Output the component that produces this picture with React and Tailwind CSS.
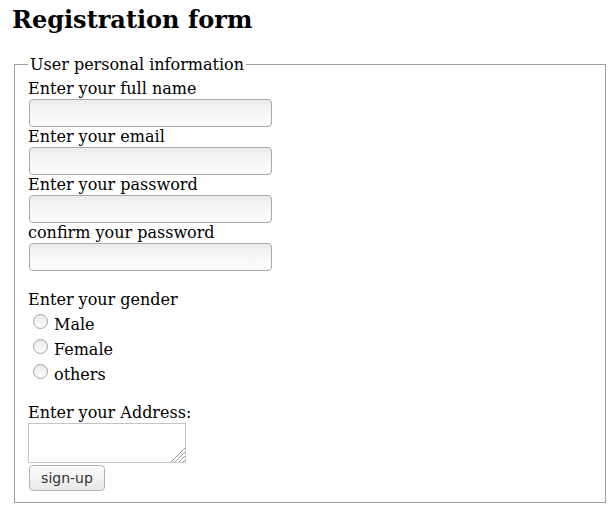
import React from "react";

const fields = [
  { label: "Enter your full name", type: "text" },
  { label: "Enter your email", type: "email" },
  { label: "Enter your password", type: "password" },
  { label: "confirm your password", type: "password" },
];

const genders = ["Male", "Female", "others"];

const Radio = ({ label }) => (
  <label className="flex items-start h-[19px] leading-[19px]">
    <span className="ml-[6px] mt-[-1px] w-[15px] h-[15px] rounded-full border border-[#a3a3a3] bg-linear-to-b from-[#e9e9e9] to-[#fdfdfd] shrink-0" />
    <span className="ml-[6px]">{label}</span>
  </label>
);

const App = () => {
  return (
    <div className="w-[608px] h-[507px] bg-white text-black font-['DejaVu_Serif',serif] text-[16px]">
      <h1 className="pt-[6px] ml-[12px] text-[24px] font-bold leading-[28px]">
        Registration form
      </h1>
      <form onSubmit={(e) => e.preventDefault()}>
        <fieldset className="mt-[21px] ml-[14px] mr-[2px] border border-[#a0a0a0] px-[12px] pb-[11px] pt-[5px]">
          <legend className="px-[2px] leading-[19px] ml-[1px]">
            User personal information
          </legend>
          <div className="flex flex-col">
            {fields.map((f) => (
              <div key={f.label} className="flex flex-col">
                <label className="h-[19px] leading-[19px] ml-[1px]">{f.label}</label>
                <input
                  type={f.type}
                  className="mt-[1px] ml-[2px] w-[243px] h-[28px] rounded-[4px] border border-[#a8a8a8] bg-linear-to-b from-[#ebebeb] via-[#f7f7f7] to-[#fcfcfc] px-[4px] outline-none"
                />
              </div>
            ))}

            <div className="mt-[19px] h-[19px] leading-[19px] ml-[1px]">Enter your gender</div>
            <div className="mt-[6px] flex flex-col gap-[6px]">
              {genders.map((g) => (
                <Radio key={g} label={g} />
              ))}
            </div>

            <div className="mt-[19px] h-[19px] leading-[19px] ml-[1px]">Enter your Address:</div>
            <div className="relative mt-[1px] ml-[1px] w-[158px] h-[40px]">
              <textarea className="w-full h-full border border-[#c4c4c4] resize-none outline-none block" />
              <svg
                className="absolute right-[1px] bottom-[1px]"
                width="14"
                height="14"
                viewBox="0 0 14 14"
              >
                <g stroke="#9a9a9a" strokeWidth="1">
                  <line x1="14" y1="0" x2="0" y2="14" />
                  <line x1="14" y1="4" x2="4" y2="14" />
                  <line x1="14" y1="8" x2="8" y2="14" />
                  <line x1="14" y1="12" x2="12" y2="14" />
                </g>
              </svg>
            </div>
            <div className="mt-[2px]">
              <button
                type="submit"
                className="ml-[2px] w-[76px] h-[26px] rounded-[4px] border border-[#b3b3b3] bg-linear-to-b from-[#fcfcfc] to-[#e8e8e8] text-[#333] font-['DejaVu_Sans',sans-serif] text-[14px] leading-[24px]"
              >
                sign-up
              </button>
            </div>
          </div>
        </fieldset>
      </form>
    </div>
  );
};

export default App;
